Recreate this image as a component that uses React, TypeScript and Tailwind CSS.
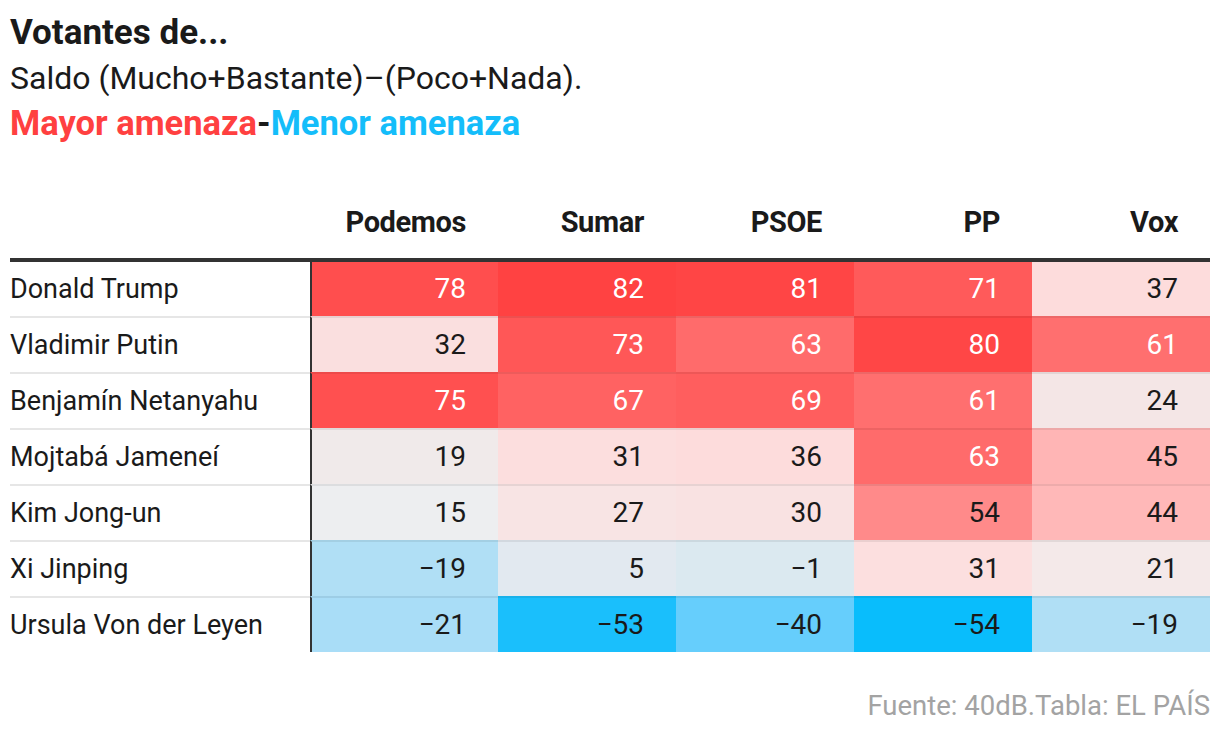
const parties = ["Podemos", "Sumar", "PSOE", "PP", "Vox"];

type Cell = { v: string; bg: string; light?: boolean };

const rows: { name: string; cells: Cell[] }[] = [
  {
    name: "Donald Trump",
    cells: [
      { v: "78", bg: "bg-[#ff4e4e]", light: true },
      { v: "82", bg: "bg-[#ff4242]", light: true },
      { v: "81", bg: "bg-[#ff4545]", light: true },
      { v: "71", bg: "bg-[#ff5a5a]", light: true },
      { v: "37", bg: "bg-[#fddcdc]" },
    ],
  },
  {
    name: "Vladimir Putin",
    cells: [
      { v: "32", bg: "bg-[#fadfdf]" },
      { v: "73", bg: "bg-[#ff5757]", light: true },
      { v: "63", bg: "bg-[#ff6b6b]", light: true },
      { v: "80", bg: "bg-[#ff4646]", light: true },
      { v: "61", bg: "bg-[#ff6f6f]", light: true },
    ],
  },
  {
    name: "Benjamín Netanyahu",
    cells: [
      { v: "75", bg: "bg-[#ff5050]", light: true },
      { v: "67", bg: "bg-[#ff6262]", light: true },
      { v: "69", bg: "bg-[#ff5e5e]", light: true },
      { v: "61", bg: "bg-[#ff6f6f]", light: true },
      { v: "24", bg: "bg-[#f4e6e6]" },
    ],
  },
  {
    name: "Mojtabá Jameneí",
    cells: [
      { v: "19", bg: "bg-[#f0eaea]" },
      { v: "31", bg: "bg-[#fcdede]" },
      { v: "36", bg: "bg-[#fddcdc]" },
      { v: "63", bg: "bg-[#ff6b6b]", light: true },
      { v: "45", bg: "bg-[#ffb5b5]" },
    ],
  },
  {
    name: "Kim Jong-un",
    cells: [
      { v: "15", bg: "bg-[#edeef0]" },
      { v: "27", bg: "bg-[#f8e4e4]" },
      { v: "30", bg: "bg-[#f9e2e2]" },
      { v: "54", bg: "bg-[#ff8a8a]" },
      { v: "44", bg: "bg-[#ffb8b8]" },
    ],
  },
  {
    name: "Xi Jinping",
    cells: [
      { v: "\u221219", bg: "bg-[#b0dff5]" },
      { v: "5", bg: "bg-[#e2e9f0]" },
      { v: "\u22121", bg: "bg-[#dbe9f0]" },
      { v: "31", bg: "bg-[#fcdfdf]" },
      { v: "21", bg: "bg-[#f4e9e9]" },
    ],
  },
  {
    name: "Ursula Von der Leyen",
    cells: [
      { v: "\u221221", bg: "bg-[#a9ddf7]" },
      { v: "\u221253", bg: "bg-[#1abffc]" },
      { v: "\u221240", bg: "bg-[#66cefc]" },
      { v: "\u221254", bg: "bg-[#09bdfc]" },
      { v: "\u221219", bg: "bg-[#b0dff5]" },
    ],
  },
];

const App = () => {
  return (
    <div className="w-[1220px] h-[736px] bg-white px-[10px] pt-[12px] font-['Roboto',sans-serif] text-[#1a1a1a]">
      {/* titulo */}
      <h1 className="text-[35px] leading-[42px] font-bold">Votantes de...</h1>
      <p className="text-[32px] leading-[48px]">Saldo (Mucho+Bastante)–(Poco+Nada).</p>
      <p className="text-[34.5px] leading-[42px] font-bold">
        <span className="text-[#ff4040]">Mayor amenaza</span>
        <span>-</span>
        <span className="text-[#14bdfa]">Menor amenaza</span>
      </p>

      {/* tabla */}
      <div className="mt-[46px] grid grid-cols-[300px_188px_178px_178px_178px_178px]">
        <div className="h-[72px] border-b-4 border-[#333]" />
        {parties.map((p) => (
          <div
            key={p}
            className="h-[72px] border-b-4 border-[#333] pr-8 pt-[17px] flex items-start justify-end text-[29px] font-bold leading-[30px] tracking-[-0.4px]"
          >
            {p}
          </div>
        ))}
        {rows.map((row, i) => (
          <div key={row.name} className="contents">
            <div
              className={`flex items-center text-[27px] ${
                i > 0 ? "h-[56px] border-t-2 border-[#e6e6e6]" : "h-[54px]"
              }`}
            >
              {row.name}
            </div>
            {row.cells.map((c, j) => (
              <div
                key={j}
                className={`flex items-center justify-end pr-8 text-[28px] ${c.bg} ${
                  c.light ? "text-white" : "text-[#1a1a1a]"
                } ${j === 0 ? "border-l-2 border-l-[#333]" : ""} ${
                  i > 0 ? "h-[56px] border-t-2 border-t-[rgba(0,0,0,0.07)]" : "h-[54px]"
                }`}
              >
                {c.v}
              </div>
            ))}
          </div>
        ))}
      </div>

      {/* fuente */}
      <div className="mt-[38px] text-right text-[27.5px] leading-[32px] text-[#a3a3a3]">Fuente: 40dB.Tabla: EL PAÍS</div>
    </div>
  );
};

export default App;
